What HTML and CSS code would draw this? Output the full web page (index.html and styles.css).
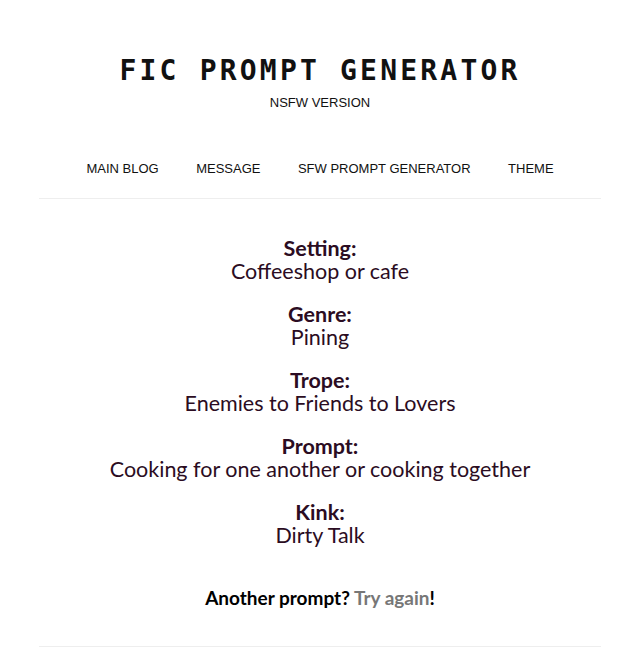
FILE: index.html
```html
<!DOCTYPE html>
<html lang="en">
<head>
  <meta charset="UTF-8" />
  <title>Fic Prompt Generator | NSFW</title>
  <meta name="viewport" content="width=device-width, initial-scale=1.0" />
  <link rel="stylesheet" href="styles.css">
</head>
<body>

  <div class="wrap">
    <header class="top">
      <h1>FIC PROMPT GENERATOR</h1>
      <p class="subtitle">NSFW VERSION</p>
    </header>

    <nav class="menu">
      <a href="#">MAIN BLOG</a>
      <a href="#">MESSAGE</a>
      <a href="#">SFW PROMPT GENERATOR</a>
      <a href="#">THEME</a>
    </nav>

    <main class="prompts">
      <div class="item">
        <b>Setting:</b>
        <span>Coffeeshop or cafe</span>
      </div>
      <div class="item">
        <b>Genre:</b>
        <span>Pining</span>
      </div>
      <div class="item">
        <b>Trope:</b>
        <span>Enemies to Friends to Lovers</span>
      </div>
      <div class="item">
        <b>Prompt:</b>
        <span>Cooking for one another or cooking together</span>
      </div>
      <div class="item">
        <b>Kink:</b>
        <span>Dirty Talk</span>
      </div>

      <p class="again">Another prompt? <a href="#">Try again</a>!</p>
    </main>
  </div>

</body>
</html>
```

FILE: styles.css
```css
body {
  margin: 0;
  background: #fff;
  color: #000;
  font-family: 'Liberation Sans', Arial, sans-serif;
}

.wrap {
  width: 562px;
  margin: 0 auto;
  padding-left: 1px;
}

.top {
  text-align: center;
  padding-top: 54px;
}

h1 {
  margin: 0;
  font-family: 'DejaVu Sans Mono', monospace;
  font-size: 28px;
  font-weight: bold;
  letter-spacing: 3.2px;
  line-height: 34px;
  color: #111;
}

p.subtitle {
  margin: 7px 0 0;
  font-size: 13px;
  line-height: 16px;
  color: #111;
}

.menu {
  display: flex;
  justify-content: center;
  gap: 37.5px;
  padding: 50px 0 21px;
  border-bottom: 1px solid #eeeeee;
}

.menu a {
  font-size: 13px;
  line-height: 16px;
  color: #111;
  text-decoration: none;
}

.prompts {
  text-align: center;
  padding-top: 38px;
  padding-bottom: 37px;
  border-bottom: 1px solid #eeeeee;
  font-family: 'Lato', sans-serif;
  font-size: 21.5px;
  line-height: 23px;
  color: #2b0c22;
}

.item {
  margin-bottom: 20px;
}

.item b,
.item span {
  display: block;
}

p.again {
  margin: 39px 0 0;
  font-size: 19px;
  font-weight: bold;
  line-height: 23px;
  color: #000;
}

p.again a {
  color: #777;
  text-decoration: none;
}
```
